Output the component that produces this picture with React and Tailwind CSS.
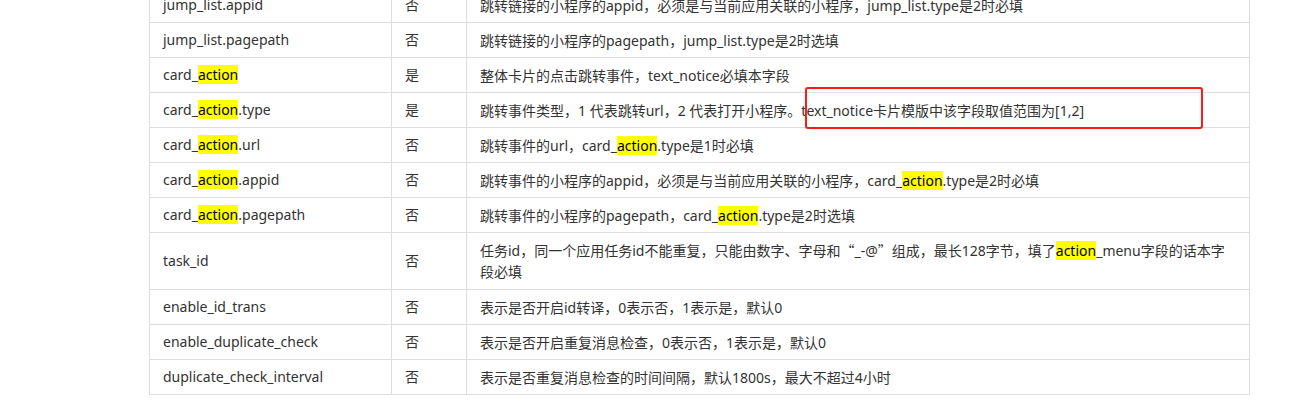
import React from "react";

const H = ({ children }) => <span className="bg-[#ffff00] text-black">{children}</span>;
const Q = ({ children }) => <span style={{ fontFamily: '"Noto Sans CJK SC", sans-serif' }}>{children}</span>;

const rows = [
  { name: "jump_list.appid", req: "否", desc: "跳转链接的小程序的appid，必须是与当前应用关联的小程序，jump_list.type是2时必填" },
  { name: "jump_list.pagepath", req: "否", desc: "跳转链接的小程序的pagepath，jump_list.type是2时选填" },
  { name: <>card_<H>action</H></>, req: "是", desc: "整体卡片的点击跳转事件，text_notice必填本字段" },
  { name: <>card_<H>action</H>.type</>, req: "是", desc: "跳转事件类型，1 代表跳转url，2 代表打开小程序。text_notice卡片模版中该字段取值范围为[1,2]" },
  { name: <>card_<H>action</H>.url</>, req: "否", desc: <>跳转事件的url，card_<H>action</H>.type是1时必填</> },
  { name: <>card_<H>action</H>.appid</>, req: "否", desc: <>跳转事件的小程序的appid，必须是与当前应用关联的小程序，card_<H>action</H>.type是2时必填</> },
  { name: <>card_<H>action</H>.pagepath</>, req: "否", desc: <>跳转事件的小程序的pagepath，card_<H>action</H>.type是2时选填</> },
  { name: "task_id", req: "否", tall: true, desc: <>任务id，同一个应用任务id不能重复，只能由数字、字母和<Q>“</Q>_-@<Q>”</Q>组成，最长128字节，填了<H>action</H>_menu字段的话本字<br />段必填</> },
  { name: "enable_id_trans", req: "否", desc: "表示是否开启id转译，0表示否，1表示是，默认0" },
  { name: "enable_duplicate_check", req: "否", desc: "表示是否开启重复消息检查，0表示否，1表示是，默认0" },
  { name: "duplicate_check_interval", req: "否", desc: "表示是否重复消息检查的时间间隔，默认1800s，最大不超过4小时" },
];

export default function App() {
  return (
    <div className="relative w-[1302px] h-[406px] overflow-hidden bg-white" style={{ fontFamily: '"Noto Sans", "Noto Sans CJK SC", sans-serif' }}>
      <div className="pl-[149px] -mt-[13px]">
        <table className="border-collapse w-[1100px] table-fixed text-[#333]">
          <colgroup>
            <col className="w-[242px]" />
            <col className="w-[75px]" />
            <col className="w-[783px]" />
          </colgroup>
          <tbody>
            {rows.map((r, i) => (
              <tr key={i} className={r.tall ? "h-[57px]" : "h-[35px]"}>
                <td className="border border-[#dddddd] px-[13px] text-[14px] leading-[20px] align-middle">{r.name}</td>
                <td className="border border-[#dddddd] px-[13px] text-[14px] leading-[20px] align-middle">{r.req}</td>
                <td className="border border-[#dddddd] px-[13px] text-[14px] leading-[21px] align-middle">{r.desc}</td>
              </tr>
            ))}
          </tbody>
        </table>
      </div>
      <div className="absolute left-[805px] top-[87px] w-[398px] h-[42px] border-2 border-[#ff1a1a] rounded-[3px]" />
    </div>
  );
}
